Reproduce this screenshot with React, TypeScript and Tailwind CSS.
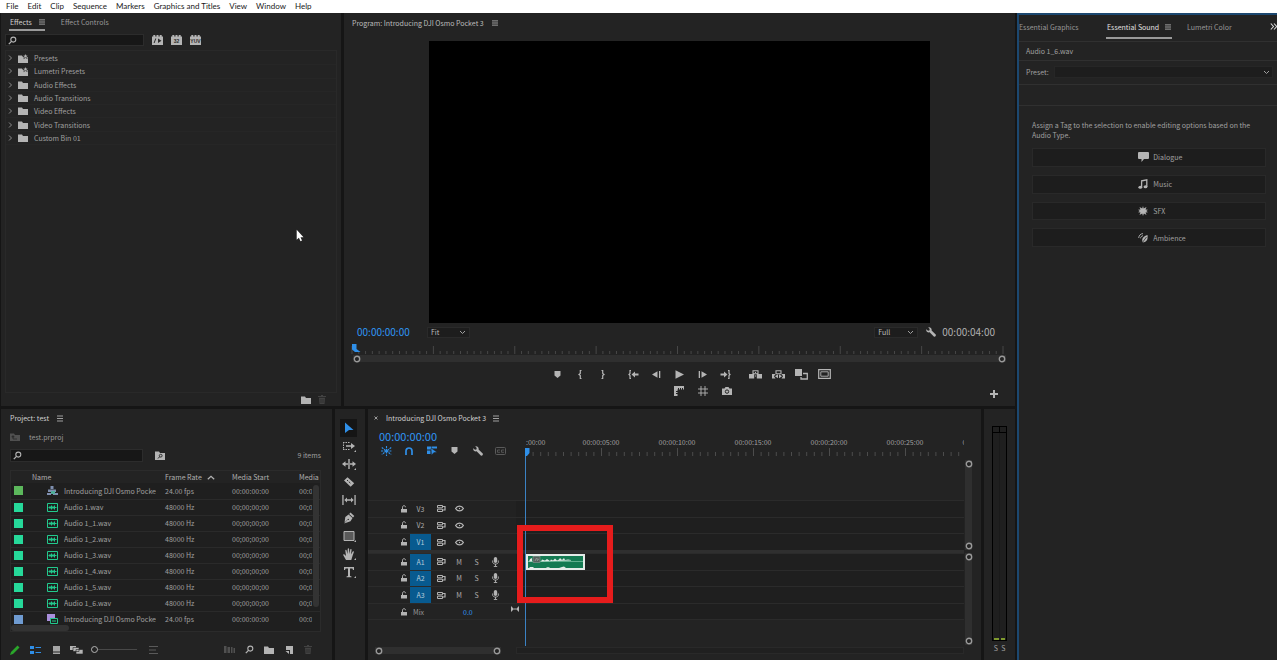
import React from 'react';

type IconProps = { w: number; h: number; className?: string; children: React.ReactNode };

function Icon({ w, h, className = 'text-[#b4b4b4]', children }: IconProps) {
  return (
    <svg width={w} height={h} viewBox={`0 0 ${w} ${h}`} className={`shrink-0 ${className}`} fill="currentColor" aria-hidden="true">
      {children}
    </svg>
  );
}

function IconButton({ label, className = '', children }: { label: string; className?: string; children: React.ReactNode }) {
  return (
    <button type="button" aria-label={label} className={`flex shrink-0 items-center justify-center ${className}`}>
      {children}
    </button>
  );
}

const stroke = { fill: 'none', stroke: 'currentColor' };

const Hamburger = ({ className = 'text-[#a0a0a0]' }: { className?: string }) => (
  <Icon w={6} h={7} className={className}>
    <path d="M0 .5h6v1H0zM0 3h6v1H0zM0 5.500h6v1H0z" />
  </Icon>
);

const TabMenu = () => (
  <Icon w={6} h={6} className="text-[#6e6e6e]">
    <path d="M0 0h6v6H0z" opacity=".6" />
    <path d="M0 0h6v1H0zM0 2.500h6v1H0zM0 5h6v1H0z" />
  </Icon>
);

const Search = () => (
  <Icon w={9} h={9}>
    <circle cx="5.300" cy="3.600" r="2.500" {...stroke} strokeWidth="1.100" />
    <path d="M3.500 5.400.8 8.100" {...stroke} strokeWidth="1.300" />
  </Icon>
);

const Folder = ({ className }: { className?: string }) => (
  <Icon w={10} h={8} className={className}>
    <path d="M0 .6h4l1 1.300h5V8H0z" />
  </Icon>
);

const PresetFolder = () => (
  <Icon w={10} h={9}>
    <path d="M0 1.600h4l1 1.300h5V9H0z" />
    <path d="m7.500-.5.8 1.700 1.900.2-1.400 1.300.4 1.900-1.700-1-1.700 1 .4-1.900L4.800 1.400l1.900-.2z" stroke="#232323" strokeWidth=".6" />
  </Icon>
);

const Trash = () => (
  <Icon w={8} h={9} className="text-[#424242]">
    <path d="M3 0h2v1h3v1H0V1h3zM1 2.800h6L6.500 9h-5z" />
    <path d="M3 4v4M5 4v4" stroke="#232323" strokeWidth=".6" />
  </Icon>
);

const Wrench = () => (
  <Icon w={10} h={10}>
    <path d="M.3 2.200 2 3.700l1.400-.3.3-1.400L2.200.3C4-.3 6 1 5.600 3.400L9.700 7.500c.5.500.2 1.200-.2 1.700-.5.5-1.200.6-1.700.2L3.600 5.300C1.500 5.800-.2 4.200.3 2.200z" />
  </Icon>
);

const Chevron = () => (
  <Icon w={7} h={5} className="pointer-events-none text-[#a0a0a0]">
    <path d="m1 1 2.500 2.500L6 1" {...stroke} />
  </Icon>
);

const Marker = () => (
  <Icon w={7} h={7}>
    <path d="M.5 0h6v4.500L3.500 7l-3-2.500z" />
  </Icon>
);

function Badge({ children }: { children: string }) {
  return (
    <Icon w={11} h={10}>
      <path d="M1.300 0h2v1.500h1.200V0h2v1.500h1.200V0h2v1.500H11V10H0V1.500h1.300z" />
      <text x="5.500" y="7.700" fontSize="5" fontWeight="700" textAnchor="middle" fill="#2a2a2a" fontFamily="Liberation Sans">
        {children}
      </text>
    </Icon>
  );
}

const Ring = () => (
  <Icon w={8} h={8} className="text-[#9a9a9a]">
    <circle cx="4" cy="4" r="2.700" fill="#232323" stroke="currentColor" strokeWidth="1.400" />
  </Icon>
);

/* ---------- Effects ---------- */

const effectBins = [
  { name: 'Presets', preset: true },
  { name: 'Lumetri Presets', preset: true },
  { name: 'Audio Effects', preset: false },
  { name: 'Audio Transitions', preset: false },
  { name: 'Video Effects', preset: false },
  { name: 'Video Transitions', preset: false },
  { name: 'Custom Bin 01', preset: false },
];

function SearchBox({ label, className }: { label: string; className: string }) {
  return (
    <label className={`flex items-center border border-[#2c2c2c] bg-[#171717] pl-[2px] ${className}`}>
      <Search />
      <input type="text" aria-label={label} className="h-full min-w-0 flex-1 bg-transparent px-1 outline-none" />
    </label>
  );
}

function EffectsPanel() {
  return (
    <section className="flex w-[340px] shrink-0 flex-col bg-[#232323]">
      <div className="flex h-[18px] items-end gap-4 pl-2">
        <button type="button" className="flex h-[15px] items-start gap-[7px] border-b-2 border-[#9a9a9a] pt-px pl-px text-[#d0d0d0]">
          Effects
          <span className="pt-[2px]"><TabMenu /></span>
        </button>
        <button type="button" className="flex h-[15px] items-start pt-px text-[#989898]">Effect Controls</button>
      </div>
      <div className="mt-[3px] flex h-3 items-center pl-1">
        <SearchBox label="Search effects" className="h-3 w-[139px]" />
        <div className="flex gap-2 pl-2">
          <IconButton label="Accelerated effects" className="w-[11px]">
            <Icon w={11} h={10}>
              <path d="M1.300 0h2v1.500h1.200V0h2v1.500h1.200V0h2v1.500H11V10H0V1.500h1.300z" />
              <path d="m6 3.500 3.500 2.300L6 8zM3.300 3.500h1L2.600 8h-1z" fill="#2a2a2a" />
            </Icon>
          </IconButton>
          <IconButton label="32-bit color effects" className="w-[11px]"><Badge>32</Badge></IconButton>
          <IconButton label="YUV effects" className="w-[11px]"><Badge>YUV</Badge></IconButton>
        </div>
      </div>
      <div className="mx-1 mt-1 flex-1 border border-[#292929] pt-px">
        <ul className="grid h-[93px] auto-rows-fr">
          {effectBins.map((bin) => (
            <li key={bin.name} className="flex items-center border-b border-[#262626] pl-[2px] text-[#a0a0a0]">
              <Icon w={5} h={6} className="text-[#8a8a8a]"><path d="m1 .5 2.500 2.500L1 5.500" {...stroke} /></Icon>
              <span className="w-[21px] pl-[5px]">{bin.preset ? <PresetFolder /> : <Folder />}</span>
              {bin.name}
            </li>
          ))}
        </ul>
      </div>
      <div className="flex h-[13px] items-center justify-end gap-[7px] pr-[15px]">
        <IconButton label="New custom bin"><Folder /></IconButton>
        <IconButton label="Delete custom item"><Trash /></IconButton>
      </div>
    </section>
  );
}

/* ---------- Program monitor ---------- */

function Dropdown({ label, value, className }: { label: string; value: string; className: string }) {
  return (
    <label className={`flex h-[11px] items-center border border-[#2a2a2a] bg-[#1d1d1d] pr-[3px] ${className}`}>
      <select aria-label={label} className="h-[9px] min-w-0 flex-1 appearance-none bg-transparent pl-[3px] leading-[9px] text-[#bcbcbc] outline-none">
        <option>{value}</option>
      </select>
      <Chevron />
    </label>
  );
}

const programTicks = Array.from({ length: 97 }, (_, i) => i);

const transport: { label: string; gap?: boolean; icon: React.ReactNode }[] = [
  { label: 'Add marker', icon: <Marker /> },
  { label: 'Mark in', icon: <Icon w={6} h={9}><path d="M4.500.5H3.300v3L2 4.500l1.300 1v3h1.200" {...stroke} strokeWidth="1.200" /></Icon> },
  { label: 'Mark out', icon: <Icon w={6} h={9}><path d="M1.500.5h1.200v3L4 4.500l-1.300 1v3H1.500" {...stroke} strokeWidth="1.200" /></Icon> },
  {
    label: 'Go to in', gap: true,
    icon: <Icon w={11} h={9}><path d="M3 .5H2v3l-1 1 1 1v3h1" {...stroke} strokeWidth="1.200" /><path d="M3.500 4.500 7 1.500v2h3.500v2H7v2z" /></Icon>,
  },
  { label: 'Step back', icon: <Icon w={9} h={7}><path d="M0 3.500 5.500.3v6.400zM7 0h1.300v7H7z" /></Icon> },
  { label: 'Play', icon: <Icon w={9} h={9}><path d="M.5.300 9 4.500.5 8.700z" /></Icon> },
  { label: 'Step forward', icon: <Icon w={9} h={7}><path d="M9 3.500 3.500.3v6.400zM.7 0H2v7H.7z" /></Icon> },
  {
    label: 'Go to out',
    icon: <Icon w={11} h={9}><path d="M8 .5h1v3l1 1-1 1v3H8" {...stroke} strokeWidth="1.200" /><path d="M7.500 4.500 4 1.500v2H.5v2H4v2z" /></Icon>,
  },
  {
    label: 'Lift', gap: true,
    icon: <Icon w={13} h={9}><path d="M0 4h4.200v-.5h1V8.500H0zM7.800 3.500h1V4H13v4.500H7.800z" /><path d="M4 .8h5v2.900H4z" {...stroke} strokeWidth="1.100" /><path d="M6 2h1v1H6zM6 5.500h1v1H6z" /></Icon>,
  },
  {
    label: 'Extract',
    icon: <Icon w={13} h={9}><path d="M0 4h3.500L2 6.300l1.500 2.200H0zM13 4H9.500L11 6.300 9.500 8.500H13z" /><path d="M4 .8h5v2.900H4z" {...stroke} strokeWidth="1.100" /><path d="M3 6.300 6 4.300v4zM10 6.300l-3-2v4z" /></Icon>,
  },
  {
    label: 'Comparison view',
    icon: <Icon w={13} h={11}><path d="M0 0h7v7H0z" /><path d="M8 4.500h4.300V10H6V8" {...stroke} strokeWidth="1.300" /></Icon>,
  },
  {
    label: 'Safe margins',
    icon: <Icon w={13} h={10}><path d="M.7.700h11.600v8.600H.7z" {...stroke} strokeWidth="1.200" /><path d="M2.800 2.800h7.400v4.400H2.800z" {...stroke} strokeWidth=".9" /></Icon>,
  },
];

function ProgramPanel() {
  return (
    <section className="flex min-w-0 flex-1 flex-col bg-[#232323]">
      <h2 className="flex h-7 items-start gap-2 pt-[5px] pl-2 text-[#bcbcbc]">
        Program: Introducing DJI Osmo Pocket 3
        <span className="pt-[2px]"><TabMenu /></span>
      </h2>
      <div className="flex min-h-0 flex-1 justify-center">
        <div className="aspect-video h-full bg-black" />
      </div>
      <div className="flex h-[18px] items-center pr-5 pl-[13px]">
        <span className="w-[70px] text-[10px] text-[#2f96f5]">00:00:00:00</span>
        <Dropdown label="Zoom level" value="Fit" className="w-[43px]" />
        <Dropdown label="Playback resolution" value="Full" className="ml-auto w-11" />
        <IconButton label="Settings" className="mr-[6px] ml-2"><Wrench /></IconButton>
        <span className="text-[10px] text-[#b0b0b0]">00:00:04:00</span>
      </div>
      <div className="flex h-[14px] items-end pr-[12px] pl-2">
        <svg className="h-[11px] w-full overflow-visible" aria-hidden="true">
          {programTicks.map((i) => (
            <line key={i} x1={`${(i / 96) * 100}%`} x2={`${(i / 96) * 100}%`} y1={i % 12 === 0 ? 2 : 7} y2={10} stroke="#474747" />
          ))}
          <path d="M0 0h4.500v5l4 3H3L0 5.500z" fill="#2f8fe8" />
        </svg>
      </div>
      <div className="mr-[9px] ml-[9px] flex h-[7px] items-center justify-between bg-[#2f2f2f]">
        <Ring />
        <Ring />
      </div>
      <div className="mt-1 flex h-4 items-center justify-center pl-[22px]">
        {transport.map((t) => (
          <IconButton key={t.label} label={t.label} className={t.gap ? 'ml-[7px] w-[23px]' : 'w-[23px]'}>{t.icon}</IconButton>
        ))}
      </div>
      <div className="mt-px mb-[7px] grid h-4 grid-cols-[1fr_auto_1fr] items-center pl-[47px]">
        <div className="col-start-2 flex">
          <IconButton label="Show rulers" className="w-6">
            <Icon w={10} h={10}><path d="M0 0h10v3.500H9V2H8v1.500H7V2H6v1.500H5V2H4v1.500h-.5V5H2v1h1.500v1H2v1h1.500v2H0z" /></Icon>
          </IconButton>
          <IconButton label="Show guides" className="w-6">
            <Icon w={10} h={10}><path d="M3 0v10M7 0v10M0 3h10M0 7h10" {...stroke} strokeWidth=".9" /></Icon>
          </IconButton>
          <IconButton label="Export frame" className="w-6">
            <Icon w={10} h={8}><path d="M0 1.500h2.500L3.500 0h3l1 1.500H10V8H0z" /><circle cx="5" cy="4.600" r="1.700" fill="none" stroke="#232323" /></Icon>
          </IconButton>
        </div>
        <IconButton label="Button editor" className="mt-[5px] mr-[17px] justify-self-end">
          <Icon w={8} h={8}><path d="M3 0h2v3h3v2H5v3H3V5H0V3h3z" /></Icon>
        </IconButton>
      </div>
    </section>
  );
}

/* ---------- Project ---------- */

const SequenceIcon = () => (
  <Icon w={11} h={10} className="text-[#7f8fb0]">
    <path d="M3.500 0h3v3h-3zM1 3.500h8v2.500H1zM0 7h4v2H0zM6 7h5v2H6z" />
    <path d="M4 5h4v3H4z" fill="#4fae9a" />
  </Icon>
);
const AudioIcon = () => (
  <Icon w={11} h={9} className="text-[#22c98d]">
    <path d="M.5.500h10v8H.5z" {...stroke} />
    <path d="M1.500 4h8v1h-8zM2.500 3h1v3h-1zM4 2.500h1v4H4zM5.500 3h1v3h-1zM7 2.500h1v4H7z" />
  </Icon>
);
const VideoIcon = () => (
  <Icon w={11} h={10} className="text-[#a98fdc]">
    <path d="M0 0h8v7H0z" />
    <path d="M3.500 4.500h7v5h-7z" fill="#1f1f1f" stroke="#22c98d" />
    <path d="M5 6.500h4v1H5z" fill="#22c98d" />
  </Icon>
);

const clips = [
  { name: 'Introducing DJI Osmo Pocket 3', rate: '24.00 fps', start: '00:00:00:00', color: 'bg-[#5cb85c]', icon: <SequenceIcon /> },
  ...['Audio 1.wav', 'Audio 1_1.wav', 'Audio 1_2.wav', 'Audio 1_3.wav', 'Audio 1_4.wav', 'Audio 1_5.wav', 'Audio 1_6.wav'].map((name) => ({
    name, rate: '48000 Hz', start: '00;00;00;00', color: 'bg-[#26d99a]', icon: <AudioIcon />,
  })),
  { name: 'Introducing DJI Osmo Pocket 3', rate: '24.00 fps', start: '00:00:00:00', color: 'bg-[#6f9bd1]', icon: <VideoIcon /> },
];

function ProjectPanel() {
  return (
    <section className="flex w-[331px] shrink-0 flex-col bg-[#232323] pr-[11px] pl-[9px]">
      <h2 className="flex h-[18px] items-center gap-2 text-[#d0d0d0]">
        Project: test <Hamburger />
      </h2>
      <div className="flex h-5 items-center gap-[9px] text-[#989898]">
        <Icon w={10} h={8} className="text-[#505050]">
          <path d="M0 .6h4l1 1.300h5V8H0z" />
          <path d="M3 3v3h4M3 2.500 1.800 4h2.400z" stroke="#232323" fill="none" strokeWidth=".7" />
        </Icon>
        test.prproj
      </div>
      <div className="flex h-4 items-center">
        <SearchBox label="Search project" className="h-[13px] w-[133px]" />
        <IconButton label="Find in project" className="ml-3">
          <Icon w={10} h={9}>
            <path d="M0 .6h4l1 1.300h5V9H0z" />
            <circle cx="5.700" cy="4.700" r="1.400" fill="none" stroke="#232323" strokeWidth=".9" />
            <path d="M4.700 5.700 3 7.500" stroke="#232323" />
          </Icon>
        </IconButton>
        <span className="ml-auto text-[#a0a0a0]">9 items</span>
      </div>
      <div className="mt-[7px] flex h-[162px] flex-col border border-[#2b2b2b] bg-[#1f1f1f]">
        <div className="relative h-[154px] overflow-hidden">
          <table className="w-full table-fixed border-collapse text-left">
            <colgroup>
              <col className="w-[21px]" />
              <col className="w-[133px]" />
              <col className="w-[67px]" />
              <col className="w-[67px]" />
              <col />
            </colgroup>
            <thead>
              <tr className="h-3 bg-[#232323] text-[#b0b0b0]">
                <th className="p-0" aria-label="Label" />
                <th className="p-0 font-normal">Name</th>
                <th className="p-0 font-normal">
                  <span className="flex items-center gap-[5px]">
                    Frame Rate
                    <Icon w={8} h={5}><path d="m.8 4.300 3.200-3 3.200 3" {...stroke} strokeWidth="1.200" /></Icon>
                  </span>
                </th>
                <th className="p-0 font-normal">Media Start</th>
                <th className="p-0 font-normal">Media</th>
              </tr>
            </thead>
            <tbody>
              {clips.map((c, i) => (
                <tr key={i} className="h-4 border-b border-[#2a2a2a] text-[#a0a0a0]">
                  <td className="p-0"><div className={`ml-[3px] h-[9px] w-[9px] ${c.color}`} /></td>
                  <td className="p-0">
                    <div className="flex items-center gap-[6px] pl-[15px]">
                      {c.icon}
                      <span className="w-[92px] overflow-hidden whitespace-nowrap">{c.name}</span>
                    </div>
                  </td>
                  <td className="p-0">{c.rate}</td>
                  <td className="p-0">{c.start}</td>
                  <td className="p-0"><div className="w-[13px] overflow-hidden whitespace-nowrap">{c.start}</div></td>
                </tr>
              ))}
            </tbody>
          </table>
          <div className="absolute top-[14px] right-px h-[122px] w-[6px] rounded-full bg-[#333333]" />
        </div>
        <div className="h-[6px] w-[58px] rounded-full bg-[#333333]" />
      </div>
      <div className="flex flex-1 items-center pt-[7px]">
        <IconButton label="Project writable" className="w-[10px]">
          <Icon w={10} h={10} className="text-[#2aa62a]"><path d="M0 10 1 7l6.500-6.500 2 2L3 9z" /></Icon>
        </IconButton>
        <IconButton label="List view" className="ml-[10px]">
          <Icon w={11} h={8} className="text-[#2f8fe8]"><path d="M0 0h4v3H0zM0 5h4v3H0zM5.500 1H11v1H5.500zM5.500 6H11v1H5.500z" /></Icon>
        </IconButton>
        <IconButton label="Icon view" className="ml-3">
          <Icon w={7} h={8}><path d="M0 0h7v5.500H0zM0 6.500h7V8H0z" opacity=".9" /></Icon>
        </IconButton>
        <IconButton label="Freeform view" className="ml-[10px]">
          <Icon w={13} h={8}><path d="M0 0h6v4H0z" /><path d="M3 1.500h6v4H3zM6 3.500h7V8H6z" stroke="#232323" strokeWidth=".6" /></Icon>
        </IconButton>
        <input
          type="range"
          aria-label="Thumbnail size"
          defaultValue={0}
          className="ml-2 h-2 w-[46px] appearance-none bg-transparent [&::-webkit-slider-runnable-track]:h-px [&::-webkit-slider-runnable-track]:bg-[#484848] [&::-webkit-slider-thumb]:-mt-[3px] [&::-webkit-slider-thumb]:size-[7px] [&::-webkit-slider-thumb]:appearance-none [&::-webkit-slider-thumb]:rounded-full [&::-webkit-slider-thumb]:border [&::-webkit-slider-thumb]:border-[#b4b4b4] [&::-webkit-slider-thumb]:bg-[#232323]"
        />
        <IconButton label="Sort icons" className="ml-3">
          <Icon w={9} h={8} className="text-[#5a5a5a]"><path d="M0 0h9v1H0zM0 3.500h7v1H0zM0 7h9v1H0z" /></Icon>
        </IconButton>
        <div className="ml-auto flex items-center gap-[10px] pr-2">
          <IconButton label="Automate to sequence"><Icon w={11} h={7} className="text-[#505050]"><path d="M0 0h2.500v7H0zM3.500 1H6v6H3.500zM7 1h1.500v6H7zM9.500 2H11v5H9.500z" /></Icon></IconButton>
          <IconButton label="Find"><Search /></IconButton>
          <IconButton label="New bin"><Folder /></IconButton>
          <IconButton label="New item" className="w-[9px]"><Icon w={8} h={8}><path d="M1 0h7v8H5V4H1z" /><path d="M.5 5H4v3z" /></Icon></IconButton>
          <IconButton label="Clear" className="w-[10px]"><Trash /></IconButton>
        </div>
      </div>
    </section>
  );
}

/* ---------- Tools ---------- */

const corner = <path d="M14 13v-2l-2 2z" />;
const tools: { label: string; icon: React.ReactNode }[] = [
  { label: 'Selection', icon: <Icon w={14} h={14} className="text-[#2f8fe8]"><path d="M3 1.500 11.500 9H7L3 12z" /></Icon> },
  { label: 'Track select forward', icon: <Icon w={14} h={14}><path d="M1 3.500h6.500M1 10.500h6.500M1.500 3v8" {...stroke} strokeDasharray="1.500 1" /><path d="M4 6.200h5V4l4 3-4 3V7.800H4z" />{corner}</Icon> },
  { label: 'Ripple edit', icon: <Icon w={14} h={14}><path d="M6.300 2h1.400v10H6.300zM0 7l3.500-2.700v2H6v1.400H3.500v2zM14 7l-3.500-2.700v2H8v1.400h2.500v2z" />{corner}</Icon> },
  { label: 'Razor', icon: <Icon w={14} h={14}><path d="m2 5.500 3.500-3.200 6.700 6-3.500 3.400z" /><path d="m5 5 4 3.700" stroke="#232323" strokeDasharray="1.500 1" /></Icon> },
  { label: 'Slip', icon: <Icon w={14} h={14}><path d="M.3 2h1.300v10H.3zM12.400 2h1.300v10h-1.300zM2.300 7 5 4.500v1.800h4V4.500L11.700 7 9 9.500V7.700H5v1.800z" /></Icon> },
  { label: 'Pen', icon: <Icon w={14} h={14}><path d="m8.500 1.500 3.800 3.500-1.300 1.400-3.800-3.500zM6.600 3.500l3.900 3.600-2 3.200-6.300 2.200 3.400-3.800 1 .4.500-.7-.6-.6-.8.4-3.200 3.500L3.300 6z" /></Icon> },
  { label: 'Rectangle', icon: <Icon w={14} h={14}><path d="M2 2.500h10v9H2z" fill="#5a5a5a" stroke="currentColor" />{corner}</Icon> },
  { label: 'Hand', icon: <Icon w={14} h={14}><path d="M4 13 1.300 8.300c-.4-.9.6-1.400 1.200-.7L4 9 3.300 3.500c0-.9 1.100-1 1.300-.1L5.500 7 5.700 2c.1-.9 1.300-.9 1.400 0L7.300 7l1-4.500c.3-.8 1.400-.6 1.300.3L9 7.500l1.700-3c.5-.7 1.400-.2 1.200.6L10.500 9 9.300 13z" />{corner}</Icon> },
  { label: 'Type', icon: <Icon w={14} h={14}><path d="M2 2h10v3h-1l-.6-1.600H8V11l1.500.5v.8h-5v-.8L6 11V3.400H3.600L3 5H2z" />{corner}</Icon> },
];

function ToolsPanel() {
  return (
    <nav aria-label="Tools" className="flex w-[30px] shrink-0 flex-col bg-[#232323] pt-[10px] pl-[5px]">
      {tools.map((t, i) => (
        <IconButton key={t.label} label={t.label} className={i === 0 ? 'h-[18px] w-[17px] bg-[#151515]' : 'h-[18px] w-[17px]'}>
          {t.icon}
        </IconButton>
      ))}
    </nav>
  );
}

/* ---------- Timeline ---------- */

const Lock = () => (
  <Icon w={6} h={8}><path d="M0 4h6v3.500H0z" /><path d="M1.500 4V2.200c0-2 3-2 3 0" {...stroke} /></Icon>
);
const SyncLock = () => (
  <Icon w={9} h={7}><path d="M.5.500h5v2.300h-5zM.5 4.200h5v2.300h-5z" {...stroke} strokeWidth="1" /><path d="M5.500 1.500h2.500v3.500H5.500" {...stroke} strokeWidth="1.200" /></Icon>
);
const Eye = () => (
  <Icon w={9} h={7}><path d="M.6 3.500C2.300.3 6.700.3 8.400 3.500 6.700 6.700 2.300 6.700.6 3.500z" {...stroke} strokeWidth="1.300" /><circle cx="4.500" cy="3.500" r=".7" /></Icon>
);
const Mic = () => (
  <Icon w={7} h={10}><rect x="1.800" y="0" width="3.400" height="6" rx="1.700" /><path d="M.6 3.500v1.300c0 3 5.800 3 5.800 0V3.500M3.500 7v2M1.800 9.500h3.400" {...stroke} strokeWidth=".9" /></Icon>
);

function TrackRow({ name, audio, targeted, children }: { name: string; audio?: boolean; targeted?: boolean; children?: React.ReactNode }) {
  return (
    <div className="flex min-h-0 border-t border-[#2b2b2b]">
      <div className="flex w-[148px] shrink-0 items-stretch bg-[#222222] pl-[30px] text-[#acacac]">
        <IconButton label={`Lock ${name}`} className="w-3"><Lock /></IconButton>
        <button type="button" className={`w-[21px] ${targeted ? 'bg-[#085a8f] text-[#b4cbdb]' : ''}`}>{name}</button>
        <IconButton label={`Sync lock ${name}`} className="w-5"><SyncLock /></IconButton>
        {audio ? (
          <>
            <button type="button" className="w-4">M</button>
            <button type="button" className="w-[19px]">S</button>
            <IconButton label={`Voice-over record ${name}`} className="w-[18px]"><Mic /></IconButton>
          </>
        ) : (
          <IconButton label={`Toggle output ${name}`} className="w-4"><Eye /></IconButton>
        )}
      </div>
      <div className="min-w-0 flex-1 bg-[#1f1f1f] pl-[10px]">{children}</div>
    </div>
  );
}

const rulerLabels = ['00:00:05:00', '00:00:10:00', '00:00:15:00', '00:00:20:00', '00:00:25:00', '00:00:30:00'];
const rulerTicks = Array.from({ length: 58 }, (_, i) => i);

function AudioClip() {
  return (
    <div className="h-4 w-[59px] border-2 border-[#e4ebe8] bg-[#147a52]">
      <svg viewBox="0 0 55 12" className="h-full w-full" aria-hidden="true">
        <path d="M0 5.500h55" stroke="#7fc4a8" strokeWidth=".7" />
        <path d="M1 5.500 2 3l2-1v3.500zM13 5.500l1-2 3 1 2-1.500 3 2 1-1.500 2 1 2-2 2 2 2-1 1-1.500 2 2 2-2 1 2 3-.5 3 .5v.5zM1 12l1-1h3l1 1zM18 12l1-.8h2l1 .8zM31 12l3-1 2-.5 2 1.500z" fill="#e4ebe8" />
        <rect x="5" y=".5" width="7" height="6" fill="#55605c" stroke="#8d9a95" strokeWidth=".6" />
        <path d="M7 5 8.500 2M8.500 3h2M9 5l1.500-2" stroke="#c0c8c5" strokeWidth=".5" />
      </svg>
    </div>
  );
}

function VerticalZoomBar({ className }: { className: string }) {
  return (
    <div className={`flex w-[7px] flex-col items-center justify-between bg-[#2f2f2f] ${className}`}>
      <Ring />
      <Ring />
    </div>
  );
}

function TimelinePanel() {
  return (
    <section className="flex min-w-0 flex-1 flex-col bg-[#232323]">
      <h2 className="flex h-[18px] items-center pl-[6px] text-[#d0d0d0]">
        <button type="button" aria-label="Close sequence" className="mr-2">
          <Icon w={4} h={4} className="text-[#9a9a9a]"><path d="m.5.500 3 3M3.500.500l-3 3" {...stroke} /></Icon>
        </button>
        Introducing DJI Osmo Pocket 3
        <span className="ml-[7px]"><Hamburger /></span>
      </h2>
      <div className="flex flex-1">
        <div className="flex min-w-0 flex-1 flex-col">
          <div className="flex h-[30px]">
            <div className="w-[157px] shrink-0 pl-[11px]">
              <div className="flex h-[17px] items-center text-[11px] text-[#2f96f5]">00:00:00:00</div>
              <div className="-ml-1 flex h-[13px] items-center">
                <IconButton label="Insert as nest" className="w-[23px]">
                  <Icon w={11} h={10} className="text-[#2f8fe8]"><path d="M5.500 0v10M.8 1.500l9.400 7M10.200 1.500.8 8.500M0 5h11" {...stroke} strokeWidth="1.100" strokeDasharray="2 .8" /></Icon>
                </IconButton>
                <IconButton label="Snap" className="w-[22px]">
                  <Icon w={8} h={8} className="text-[#2f8fe8]"><path d="M1 8V4c0-4 6-4 6 0v4" {...stroke} strokeWidth="1.700" /></Icon>
                </IconButton>
                <IconButton label="Linked selection" className="w-[23px]">
                  <Icon w={10} h={9} className="text-[#2f8fe8]"><path d="M0 .5h4v3H0zM0 4.500h3.500v3.500H0zM4.500.5H10v2H4.500z" /><path d="M4 2 10 6.300 7 6.600 4.500 9z" stroke="#232323" strokeWidth=".4" /></Icon>
                </IconButton>
                <IconButton label="Add marker" className="w-[23px]"><Marker /></IconButton>
                <IconButton label="Timeline settings" className="w-[23px]"><Wrench /></IconButton>
                <IconButton label="Caption options" className="w-[23px]">
                  <Icon w={11} h={8} className="text-[#5a5a5a]"><rect x=".5" y=".5" width="10" height="7" rx="1" {...stroke} /><path d="M5 3H2.500v2.300H5M9 3H6.500v2.300H9" {...stroke} strokeWidth=".9" /></Icon>
                </IconButton>
              </div>
            </div>
            <div className="min-w-0 flex-1">
              <div className="flex h-5 items-end overflow-hidden text-[#a0a0a0]">
                <span className="w-[38px] shrink-0 pl-px">:00:00</span>
                {rulerLabels.map((l) => (
                  <span key={l} className="w-[76px] shrink-0 text-center">{l}</span>
                ))}
              </div>
              <svg className="h-[10px] w-full overflow-hidden" aria-hidden="true">
                {rulerTicks.map((i) => (
                  <line key={i} x1={i * 7.6 + 0.5} x2={i * 7.6 + 0.5} y1={i % 10 === 0 ? 1 : 5} y2={9} stroke="#4c4c4c" />
                ))}
              </svg>
            </div>
          </div>
          <div className="relative flex flex-1 flex-col">
            <div className="h-[43px]" />
            <div className="grid h-[50px] grid-rows-3">
              <TrackRow name="V3" />
              <TrackRow name="V2" />
              <TrackRow name="V1" targeted />
            </div>
            <div className="h-[3px] bg-[#2f2f2f]" />
            <div className="grid h-[50px] grid-rows-3">
              <TrackRow name="A1" audio targeted><AudioClip /></TrackRow>
              <TrackRow name="A2" audio targeted />
              <TrackRow name="A3" audio targeted />
            </div>
            <div className="flex h-[17px] border-y border-[#2b2b2b]">
              <div className="flex w-[157px] shrink-0 items-center pl-[30px] text-[#989898]">
                <IconButton label="Lock mix" className="w-3"><Lock /></IconButton>
                <span className="w-[53px] pl-[3px]">Mix</span>
                <span className="text-[#2f96f5]">0.0</span>
                <span className="ml-auto pr-[6px] pb-[5px]"><Icon w={8} h={6}><path d="M0 0 3 3 0 6zM8 0 5 3l3 3zM3 2.500h2v1H3z" /></Icon></span>
              </div>
              <div className="flex-1 bg-[#1f1f1f]" />
            </div>
            <div className="absolute -top-[9px] bottom-0 left-[157px] flex w-[5px] flex-col">
              <Icon w={5} h={8} className="text-[#2f8fe8]"><path d="M0 0h4.500v5L2 8H0z" /></Icon>
              <div className="w-px flex-1 bg-[#3b82c4]" />
            </div>
            <div className="absolute top-[68px] left-[149px] h-[78px] w-24 border-[6px] border-[#e61c1c]" />
          </div>
          <div className="mb-[5px] flex h-[9px] items-center pl-[7px]">
            <div className="flex h-[7px] w-[126px] items-center justify-between bg-[#2f2f2f]">
              <Ring />
              <Ring />
            </div>
            <div className="ml-[15px] h-[7px] flex-1 border border-[#292929] bg-[#202020]" />
          </div>
        </div>
        <div className="flex w-[17px] shrink-0 flex-col pt-[33px] pb-[15px] pl-px">
          <VerticalZoomBar className="h-[90px]" />
          <div className="h-[3px] w-[7px] bg-[#232323]" />
          <VerticalZoomBar className="flex-1" />
        </div>
      </div>
    </section>
  );
}

function AudioMeters() {
  return (
    <section aria-label="Audio meters" className="flex w-[31px] shrink-0 flex-col bg-[#232323] px-2 pt-[17px]">
      <div className="grid flex-1 grid-cols-2 border border-black bg-[#1f1f1f]">
        {[0, 1].map((k) => (
          <div key={k} className="flex flex-col">
            <div className={`h-[6px] border-b border-black ${k === 0 ? 'border-r' : ''}`} />
            <div className={`flex-1 ${k === 0 ? 'border-r border-[#1a1a1a]' : ''}`} />
            <div className="mx-px h-[2px] bg-[#7f9a2e]" />
          </div>
        ))}
      </div>
      <div className="mt-[2px] mb-[7px] grid h-[10px] grid-cols-2 text-[#a0a0a0]">
        <button type="button" aria-label="Solo left">S</button>
        <button type="button" aria-label="Solo right">S</button>
      </div>
    </section>
  );
}

/* ---------- Essential Sound ---------- */

const audioTags = [
  { name: 'Dialogue', icon: <Icon w={11} h={10}><path d="M1 0h9q1 0 1 1v5q0 1-1 1H6L3.500 10V7H1Q0 7 0 6V1q0-1 1-1z" /></Icon> },
  { name: 'Music', icon: <Icon w={10} h={10}><path d="M2.800 2 8.500.900v7M3.300 1.800v6.500" {...stroke} strokeWidth="1.300" transform="translate(.3 0)" /><ellipse cx="2.300" cy="8.200" rx="1.900" ry="1.500" /><ellipse cx="7.500" cy="7.800" rx="1.900" ry="1.500" /></Icon> },
  { name: 'SFX', icon: <Icon w={10} h={10}><path d="m5 0 .7 2.600L8.500 1l-1 2.500L10 3.800 8.200 5 10 6.300l-2.500.2 1 2.500-2.600-1.500L5 10l-.8-2.500L1.500 9l1-2.500L0 6.300 1.800 5 0 3.800l2.500-.3-1-2.500 2.700 1.600z" /></Icon> },
  { name: 'Ambience', icon: <Icon w={10} h={10}><path d="M9.500 2C5 3.500 3.500 5.500 4.500 9.500 9 9 10 6.500 9.500 2z" /><path d="M8.500 4 4 10" stroke="#1d1d1d" strokeWidth=".7" /><path d="M.7 5C.9 2.500 2.500.7 5 .6M2.500 5.300C2.700 4 3.500 3 5 2.700" {...stroke} strokeWidth=".9" /></Icon> },
];

function SoundPanel() {
  return (
    <aside className="flex w-[260px] shrink-0 flex-col border-t-2 border-l-2 border-[#1c4870] bg-[#232323]">
      <div className="flex h-[27px] items-end border-b border-[#303030] text-[#989898]">
        <button type="button" className="mb-[3px] h-[17px] w-[87px] pb-[6px] text-left whitespace-nowrap">Essential Graphics</button>
        <button type="button" className="mb-[2px] flex h-[18px] w-[66px] items-center justify-between border-b-2 border-[#9a9a9a] pr-px pb-1 pl-px text-[#e0e0e0]">
          Essential Sound
          <TabMenu />
        </button>
        <button type="button" className="mb-[3px] ml-[15px] h-[17px] pb-[6px] whitespace-nowrap">Lumetri Color</button>
        <IconButton label="More panels" className="mb-[11px] ml-auto">
          <Icon w={7} h={7} className="text-[#dadada]"><path d="m.8.500 2.700 3-2.700 3M4 .500l2.700 3-2.700 3" {...stroke} strokeWidth="1.100" /></Icon>
        </IconButton>
      </div>
      <div className="flex h-[19px] items-center border-b border-[#303030] pl-[7px] text-[#a0a0a0]">Audio 1_6.wav</div>
      <div className="flex h-6 items-center border-b border-[#303030] pr-1 pb-px pl-[7px] text-[#a0a0a0]">
        <label htmlFor="preset" className="w-7">Preset:</label>
        <div className="flex h-3 flex-1 items-center border border-[#262626] bg-[#1d1d1d] pr-[2px]">
          <select id="preset" className="h-[10px] min-w-0 flex-1 appearance-none bg-transparent outline-none"><option value="" /></select>
          <Chevron />
        </div>
      </div>
      <div className="h-[21px] border-b border-[#303030]" />
      <div className="pt-[14px] pr-[11px] pl-[13px] text-[#a0a0a0]">
        <p>Assign a Tag to the selection to enable editing options based on the Audio Type.</p>
        <div className="mt-2 grid h-[99px] grid-rows-4 gap-2">
          {audioTags.map((t) => (
            <button key={t.name} type="button" className="flex items-center border border-[#292929] bg-[#1d1d1d] pl-[45%]">
              <span className="w-[15px]">{t.icon}</span>
              {t.name}
            </button>
          ))}
        </div>
      </div>
    </aside>
  );
}

const menus = ['File', 'Edit', 'Clip', 'Sequence', 'Markers', 'Graphics and Titles', 'View', 'Window', 'Help'];

export default function App() {
  return (
    <div className="relative flex min-h-screen flex-col bg-[#151515] font-['Noto_Sans_CJK_SC','Noto_Sans',sans-serif] text-[7px] leading-[10px]">
      <header className="flex h-[13px] items-center gap-[9px] bg-white pb-px pl-[6px] font-['Lato','Open_Sans',sans-serif] text-[8px] text-[#1a1a1a]">
        {menus.map((m) => (
          <button key={m} type="button" className="whitespace-nowrap">{m}</button>
        ))}
      </header>
      <main className="flex flex-1 gap-[2px] pl-px">
        <div className="flex min-w-0 flex-1 flex-col gap-[3px]">
          <div className="flex min-h-0 flex-1 gap-[3px]">
            <EffectsPanel />
            <ProgramPanel />
          </div>
          <div className="flex h-[251px] gap-[3px]">
            <ProjectPanel />
            <ToolsPanel />
            <TimelinePanel />
            <AudioMeters />
          </div>
        </div>
        <SoundPanel />
      </main>
      <svg width="8" height="13" viewBox="0 0 8 13" className="absolute top-[229px] left-[296px]" aria-hidden="true">
        <path d="M.7.700v10l2.200-2 1.600 3.600 1.500-.7-1.500-3.400h3z" fill="#fff" />
      </svg>
    </div>
  );
}
